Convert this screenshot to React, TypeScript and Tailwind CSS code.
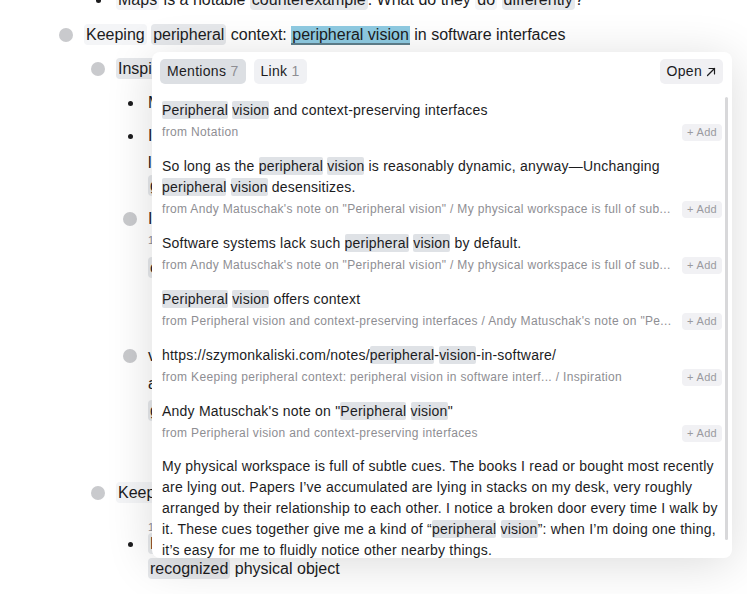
import React from "react"

const font = "font-['Liberation_Sans',Arial,sans-serif]"

// highlighted term inside popover text
const Hl = ({ children }: { children: React.ReactNode }) => (
  <span className="rounded-[2px] bg-[#dfe2e6] py-[1px]">{children}</span>
)

const Chip = ({ children, tone = "gray" }: { children: React.ReactNode; tone?: "gray" | "faint" }) => (
  <span
    className={
      tone === "gray"
        ? "rounded-[4px] bg-[#e6e8eb] px-[2px] py-[2px]"
        : "rounded-[4px] bg-[#f4f5f7] px-[2px] py-[2px]"
    }
  >
    {children}
  </span>
)

type RowProps = {
  pl: string
  bullet?: "circle" | "dot" | "none"
  className?: string
  children: React.ReactNode
}

function Row({ pl, bullet = "none", className = "", children }: RowProps) {
  return (
    <div className={`flex h-[24px] items-center ${pl} ${className}`}>
      <div className="flex w-[20px] shrink-0 justify-center">
        {bullet === "circle" && <div className="h-[14px] w-[14px] rounded-full bg-[#c9cacd]" />}
        {bullet === "dot" && <div className="h-[5px] w-[5px] rounded-full bg-[#1c1c1e]" />}
      </div>
      <div className="ml-[8px] whitespace-nowrap text-[16px] text-[#1c1c1e]">{children}</div>
    </div>
  )
}

type Mention = {
  text: React.ReactNode
  from: string
}

const mentions: Mention[] = [
  {
    text: (
      <>
        <Hl>Peripheral</Hl> <Hl>vision</Hl> and context-preserving interfaces
      </>
    ),
    from: "from Notation",
  },
  {
    text: (
      <>
        So long as the <Hl>peripheral</Hl> <Hl>vision</Hl> is reasonably dynamic, anyway—Unchanging
        <br />
        <Hl>peripheral</Hl> <Hl>vision</Hl> desensitizes.
      </>
    ),
    from: 'from Andy Matuschak\'s note on "Peripheral vision" / My physical workspace is full of sub...',
  },
  {
    text: (
      <>
        Software systems lack such <Hl>peripheral</Hl> <Hl>vision</Hl> by default.
      </>
    ),
    from: 'from Andy Matuschak\'s note on "Peripheral vision" / My physical workspace is full of sub...',
  },
  {
    text: (
      <>
        <Hl>Peripheral</Hl> <Hl>vision</Hl> offers context
      </>
    ),
    from: 'from Peripheral vision and context-preserving interfaces / Andy Matuschak\'s note on "Pe...',
  },
  {
    text: (
      <>
        https://szymonkaliski.com/notes/<Hl>peripheral</Hl>-<Hl>vision</Hl>-in-software/
      </>
    ),
    from: "from Keeping peripheral context: peripheral vision in software interf... / Inspiration",
  },
  {
    text: (
      <>
        Andy Matuschak's note on "<Hl>Peripheral</Hl> <Hl>vision</Hl>"
      </>
    ),
    from: "from Peripheral vision and context-preserving interfaces",
  },
]

function ArrowUpRight() {
  return (
    <svg width="10" height="10" viewBox="0 0 10 10" fill="none" stroke="#1c1c1e" strokeWidth="1.2" strokeLinecap="round">
      <path d="M1.5 8.5 L8.5 1.5" />
      <path d="M3 1.5 H8.5 V7" />
    </svg>
  )
}

function MentionsPopover() {
  return (
    <div className="absolute left-[152px] top-[52px] flex h-[506px] w-[580px] flex-col overflow-hidden rounded-[8px] bg-white shadow-[0_6px_48px_rgba(0,0,0,0.14)]">
      <div className="flex items-center justify-between pl-[8px] pr-[9px] pt-[7px]">
        <div className="flex gap-[8px]">
          <button className="h-[25px] rounded-[5px] bg-[#dcdfe3] px-[7px] text-[14px] tracking-[0.3px] text-[#1c1c1e]">
            Mentions <span className="text-[#8e8e93]">7</span>
          </button>
          <button className="h-[25px] rounded-[5px] bg-[#f0f1f4] px-[7px] text-[14px] tracking-[0.3px] text-[#1c1c1e]">
            Link <span className="text-[#8e8e93]">1</span>
          </button>
        </div>
        <button className="flex h-[25px] items-center gap-[4px] rounded-[5px] bg-[#f0f0f3] px-[7px] text-[14px] tracking-[0.3px] text-[#1c1c1e]">
          Open <ArrowUpRight />
        </button>
      </div>

      <div className="mt-[9px] flex-1 overflow-hidden pl-[10px] pr-[10px]">
        {mentions.map((m, i) => (
          <div key={i} className="pb-[6px] pt-[7px]">
            <div className="whitespace-nowrap text-[14px] leading-[21px] tracking-[0.22px] text-[#1c1c1e]">{m.text}</div>
            <div className="flex h-[22px] items-center justify-between">
              <span className="whitespace-nowrap text-[12px] tracking-[0.34px] text-[#8e8e93]">{m.from}</span>
              <button className="h-[17px] shrink-0 rounded-[4px] bg-[#f1f1f4] px-[5px] text-[11px] leading-[17px] tracking-[0.3px] text-[#9a9a9f]">
                + Add
              </button>
            </div>
          </div>
        ))}
        <div className="pt-[6px] whitespace-nowrap text-[14px] leading-[21px] tracking-[0.22px] text-[#1c1c1e]">
          My physical workspace is full of subtle cues. The books I read or bought most recently
          <br />
          are lying out. Papers I’ve accumulated are lying in stacks on my desk, very roughly
          <br />
          arranged by their relationship to each other. I notice a broken door every time I walk by
          <br />
          it. These cues together give me a kind of “<Hl>peripheral</Hl> <Hl>vision</Hl>”: when I’m doing one thing,
          <br />
          it’s easy for me to fluidly notice other nearby things.
        </div>
      </div>

      {/* scroll thumb */}
      <div className="absolute right-[4px] top-[45px] h-[443px] w-[3px] rounded-full bg-[#d8d8da]" />
    </div>
  )
}

export default function App() {
  return (
    <div className={`relative h-[594px] w-[747px] overflow-hidden bg-white ${font}`}>
      <div className="-mt-[12px] flex flex-col">
        <Row pl="pl-[88px]" bullet="dot">
          <Chip tone="faint">Maps</Chip> is a notable <Chip>counterexample</Chip>. What do they{" "}
          <Chip tone="faint">do</Chip> <Chip>differently</Chip>?
        </Row>
        <Row pl="pl-[56px]" bullet="circle" className="mt-[11px]">
          <Chip tone="faint">Keeping</Chip> <Chip>peripheral</Chip> context:{" "}
          <span className="border-b-2 border-[#5e7f8c] bg-[#8fcbe2] px-[1px]">peripheral vision</span> in software
          interfaces
        </Row>
        <Row pl="pl-[88px]" bullet="circle" className="mt-[10px]">
          <Chip>Inspiration</Chip>
        </Row>
        <Row pl="pl-[120px]" bullet="dot" className="mt-[10px]">
          Maps show the surrounding streets
        </Row>
        <Row pl="pl-[120px]" bullet="dot" className="mt-[9px]">
          In a city you keep landmarks in view
        </Row>
        <Row pl="pl-[120px]" className="mt-[3px]">
          like the way a room is arranged
        </Row>
        <Row pl="pl-[120px]" className="-mt-[1px]">
          <Chip>glance</Chip>
        </Row>
        <Row pl="pl-[120px]" bullet="circle" className="mt-[9px]">
          Instruments in a cockpit
        </Row>
        <Row pl="pl-[120px]" className="-mt-[4px]">
          <span className="text-[11px] text-[#8e8e93]">1</span>
        </Row>
        <Row pl="pl-[120px]" className="mt-[5px]">
          <Chip>cockpit</Chip>
        </Row>
        <Row pl="pl-[120px]" bullet="circle" className="mt-[64px]">
          video games show a minimap
        </Row>
        <Row pl="pl-[120px]" className="mt-[4px]">
          and a status bar
        </Row>
        <Row pl="pl-[120px]" className="mt-[3px]">
          <Chip>game</Chip>
        </Row>
        <Row pl="pl-[88px]" bullet="circle" className="mt-[58px]">
          <Chip tone="faint">Keeping track of things</Chip>
        </Row>
        <Row pl="pl-[120px]" className="mt-[9px]">
          <span className="text-[11px] text-[#8e8e93]">1</span>
        </Row>
        <Row pl="pl-[120px]" bullet="dot" className="-mt-[6px]">
          <Chip>Each</Chip> item is a
        </Row>
        <Row pl="pl-[120px]" className="mt-[1px]">
          <Chip>recognized</Chip> physical object
        </Row>
      </div>

      <MentionsPopover />
    </div>
  )
}
